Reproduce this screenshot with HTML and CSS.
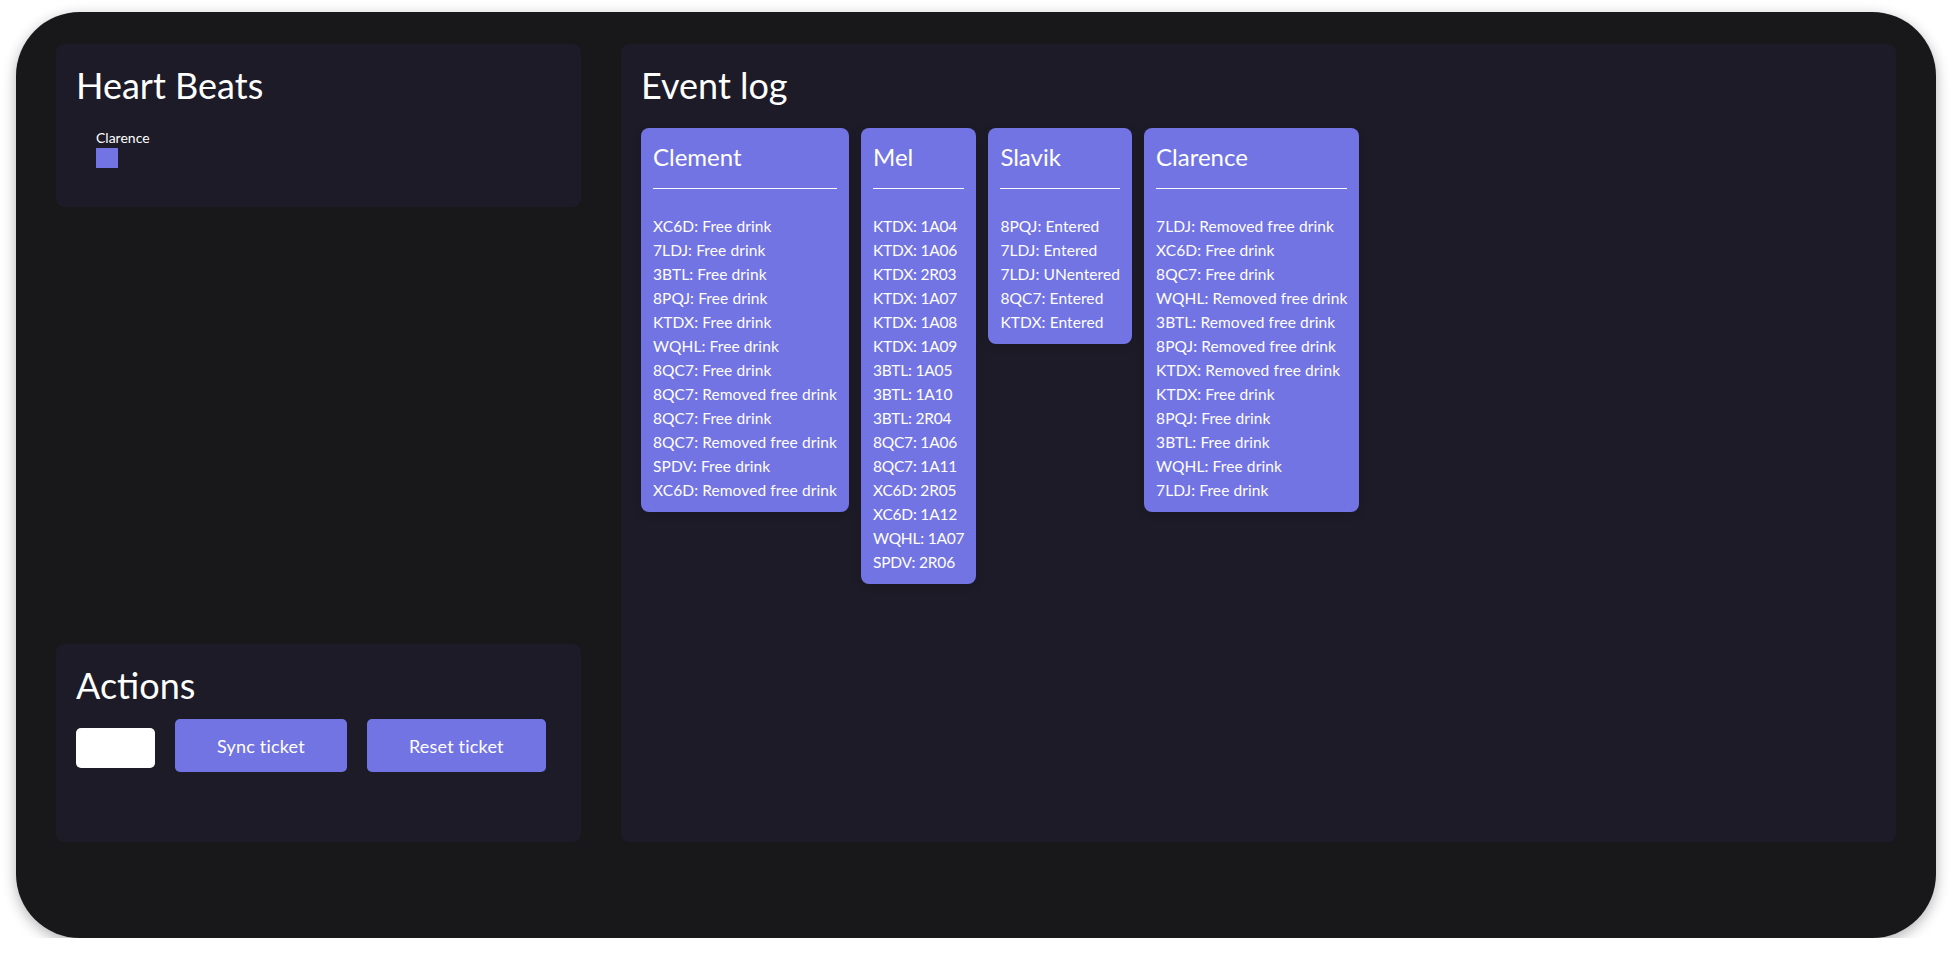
FILE: index.html
```html
<!DOCTYPE html>
<html>
<head>
    <title>Ticket dashboard</title>
    <link rel="stylesheet" href="styles.css">
</head>
<body>
    <div class="window">
        <div class="sidebar">
            <div class="panel heartbeats">
                <h1>Heart Beats</h1>
                <div class="beat-list">
                    <div class="beat">
                        <div class="beat-name">Clarence</div>
                        <div class="beat-dot"></div>
                    </div>
                </div>
            </div>

            <div class="panel actions">
                <h1>Actions</h1>
                <div class="action-row">
                    <input class="ticket-input" type="text">
                    <button class="btn">Sync ticket</button>
                    <button class="btn">Reset ticket</button>
                </div>
            </div>
        </div>

        <div class="panel eventlog">
            <h1>Event log</h1>
            <div class="cards">
                <div class="card">
                    <h2>Clement</h2>
                    <ul class="entries">
                        <li>XC6D: Free drink</li>
                        <li>7LDJ: Free drink</li>
                        <li>3BTL: Free drink</li>
                        <li>8PQJ: Free drink</li>
                        <li>KTDX: Free drink</li>
                        <li>WQHL: Free drink</li>
                        <li>8QC7: Free drink</li>
                        <li>8QC7: Removed free drink</li>
                        <li>8QC7: Free drink</li>
                        <li>8QC7: Removed free drink</li>
                        <li>SPDV: Free drink</li>
                        <li>XC6D: Removed free drink</li>
                    </ul>
                </div>
                <div class="card">
                    <h2>Mel</h2>
                    <ul class="entries seats">
                        <li>KTDX: 1A04</li>
                        <li>KTDX: 1A06</li>
                        <li>KTDX: 2R03</li>
                        <li>KTDX: 1A07</li>
                        <li>KTDX: 1A08</li>
                        <li>KTDX: 1A09</li>
                        <li>3BTL: 1A05</li>
                        <li>3BTL: 1A10</li>
                        <li>3BTL: 2R04</li>
                        <li>8QC7: 1A06</li>
                        <li>8QC7: 1A11</li>
                        <li>XC6D: 2R05</li>
                        <li>XC6D: 1A12</li>
                        <li>WQHL: 1A07</li>
                        <li>SPDV: 2R06</li>
                    </ul>
                </div>
                <div class="card">
                    <h2>Slavik</h2>
                    <ul class="entries">
                        <li>8PQJ: Entered</li>
                        <li>7LDJ: Entered</li>
                        <li>7LDJ: UNentered</li>
                        <li>8QC7: Entered</li>
                        <li>KTDX: Entered</li>
                    </ul>
                </div>
                <div class="card">
                    <h2>Clarence</h2>
                    <ul class="entries">
                        <li>7LDJ: Removed free drink</li>
                        <li>XC6D: Free drink</li>
                        <li>8QC7: Free drink</li>
                        <li>WQHL: Removed free drink</li>
                        <li>3BTL: Removed free drink</li>
                        <li>8PQJ: Removed free drink</li>
                        <li>KTDX: Removed free drink</li>
                        <li>KTDX: Free drink</li>
                        <li>8PQJ: Free drink</li>
                        <li>3BTL: Free drink</li>
                        <li>WQHL: Free drink</li>
                        <li>7LDJ: Free drink</li>
                    </ul>
                </div>
            </div>
        </div>
    </div>
</body>
</html>
```

FILE: styles.css
```css
body {
    margin: 0;
    background: #fff;
    font-family: 'Lato', 'Noto Sans', sans-serif;
    color: #fff;
}
.window {
    box-sizing: border-box;
    width: 1920px;
    height: 926px;
    margin: 12px 16px 0;
    padding: 32px 40px;
    background: #18181a;
    border-radius: 64px;
    box-shadow: 0 4px 14px rgba(0, 0, 0, 0.3);
    display: grid;
    grid-template-columns: 525px 1fr;
    gap: 40px;
    align-items: start;
}
.sidebar {
    height: 798px;
    display: flex;
    flex-direction: column;
    justify-content: space-between;
}
.panel {
    box-sizing: border-box;
    background: #1c1b27;
    border-radius: 8px;
    padding: 17px 20px;
}
.panel h1 {
    margin: 0;
    font-size: 36px;
    font-weight: 400;
    line-height: 48px;
}
.heartbeats {
    height: 163px;
}
.beat-list {
    margin-top: 19px;
    padding-left: 20px;
}
.beat-name {
    font-size: 14px;
    line-height: 19px;
}
.beat-dot {
    width: 22px;
    height: 20px;
    margin-top: 1px;
    background: #7274e3;
}
.actions {
    height: 198px;
}
.action-row {
    display: flex;
    align-items: flex-start;
    gap: 20px;
    margin-top: 10px;
}
.ticket-input {
    box-sizing: border-box;
    width: 79px;
    height: 40px;
    margin-top: 9px;
    border: none;
    border-radius: 5px;
    background: #fff;
}
.btn {
    height: 53px;
    padding: 0 42px;
    border: none;
    border-radius: 5px;
    background: #7274e3;
    color: #fff;
    font-family: inherit;
    font-size: 18px;
    letter-spacing: 0.2px;
}
.eventlog {
    height: 798px;
}
.cards {
    display: flex;
    align-items: flex-start;
    gap: 12px;
    margin-top: 19px;
}
.card {
    background: #7274e3;
    border-radius: 8px;
    padding: 13px 12px 10px;
    box-shadow: 0 2px 8px rgba(0, 0, 0, 0.15);
}
.card h2 {
    margin: 0;
    padding-bottom: 15px;
    border-bottom: 1px solid #fff;
    font-size: 24px;
    font-weight: 400;
    line-height: 32px;
}
.entries {
    list-style: none;
    margin: 25px 0 0;
    padding: 0;
    font-size: 15.5px;
    letter-spacing: 0.1px;
    line-height: 24px;
    white-space: nowrap;
}
.seats {
    letter-spacing: -0.2px;
}
```
